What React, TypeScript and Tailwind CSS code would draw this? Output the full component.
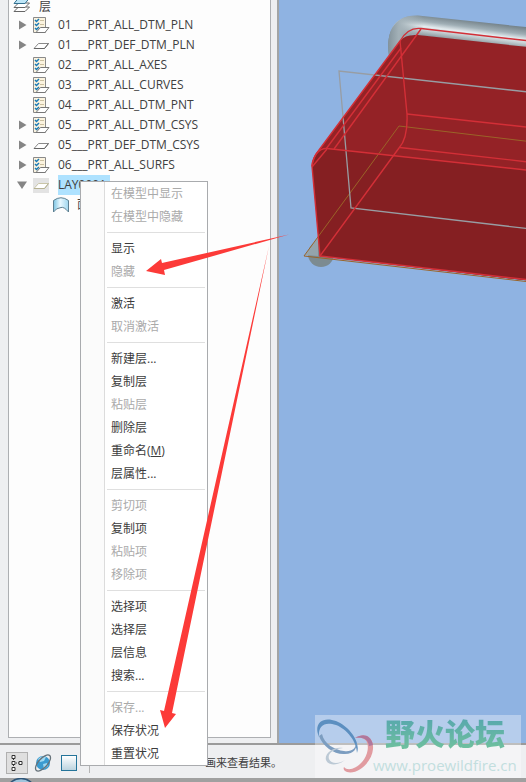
import React from 'react';

type IconKind = 'list' | 'plane';

interface LayerRow {
  name: string;
  icon: IconKind;
  expandable?: boolean;
}

interface MenuEntry {
  label: string;
  disabled?: boolean;
  accessKey?: string;
}

const layers: LayerRow[] = [
  { name: '01___PRT_ALL_DTM_PLN', icon: 'list', expandable: true },
  { name: '01___PRT_DEF_DTM_PLN', icon: 'plane', expandable: true },
  { name: '02___PRT_ALL_AXES', icon: 'list' },
  { name: '03___PRT_ALL_CURVES', icon: 'list' },
  { name: '04___PRT_ALL_DTM_PNT', icon: 'list' },
  { name: '05___PRT_ALL_DTM_CSYS', icon: 'list', expandable: true },
  { name: '05___PRT_DEF_DTM_CSYS', icon: 'plane', expandable: true },
  { name: '06___PRT_ALL_SURFS', icon: 'list', expandable: true },
];

const menuGroups: MenuEntry[][] = [
  [
    { label: '在模型中显示', disabled: true },
    { label: '在模型中隐藏', disabled: true },
  ],
  [{ label: '显示' }, { label: '隐藏', disabled: true }],
  [{ label: '激活' }, { label: '取消激活', disabled: true }],
  [
    { label: '新建层...' },
    { label: '复制层' },
    { label: '粘贴层', disabled: true },
    { label: '删除层' },
    { label: '重命名', accessKey: 'M' },
    { label: '层属性...' },
  ],
  [
    { label: '剪切项', disabled: true },
    { label: '复制项' },
    { label: '粘贴项', disabled: true },
    { label: '移除项', disabled: true },
  ],
  [{ label: '选择项' }, { label: '选择层' }, { label: '层信息' }, { label: '搜索...' }],
  [{ label: '保存...', disabled: true }, { label: '保存状况' }, { label: '重置状况' }],
];

const LayersIcon = () => (
  <svg width="18" height="20" viewBox="0 0 18 20" className="shrink-0">
    <g fill="#fff" stroke="#666" strokeLinejoin="round">
      <path d="M1 16.500 5.500 12h11L12 16.500z" />
      <path d="M1 12.500 5.500 8h11L12 12.500z" />
      <path d="M1 8.500 5.500 3h11L12 8.500z" fill="#bfe6f7" stroke="#33708f" />
    </g>
  </svg>
);

const ListIcon = () => (
  <svg width="17" height="17" viewBox="0 0 17 17" className="shrink-0">
    <path d="M.5.5h12v15H.5z" fill="#fbf3df" stroke="#8a8a8a" />
    <path d="M7 3.500h4M7 7.500h4M7 11.500h3" stroke="#cbbf9f" />
    <path d="m2 3 1.500 1.500L6 2M2 7l1.500 1.500L6 6M2 11l1.500 1.500L6 10" fill="none" stroke="#1879b5" strokeWidth="1.500" />
    <path d="M3 15.500 7.500 10.500h8.500L12 15.500z" fill="#fff" stroke="#777" />
  </svg>
);

const PlaneIcon = ({ selected = false }: { selected?: boolean }) => (
  <svg width="17" height="17" viewBox="0 0 17 17" className="shrink-0">
    {selected && <path d="M0 1h16v15H0z" fill="#e3e3e3" />}
    <path d="M1 11.500 5.500 6.500h10L11.500 11.500z" fill="#fff" stroke={selected ? '#c9c5a8' : '#8a8a8a'} />
    <path d="M1 11.500h10.500l4-5" fill="none" stroke={selected ? '#b5b192' : '#666'} />
  </svg>
);

const SurfaceIcon = () => (
  <svg width="16" height="16" viewBox="0 0 16 16" className="shrink-0">
    <defs>
      <linearGradient id="surf">
        <stop offset="0" stopColor="#7cc4e2" />
        <stop offset=".45" stopColor="#e8f8ff" />
        <stop offset="1" stopColor="#9fd6ee" />
      </linearGradient>
    </defs>
    <path d="M.5 3.500Q8-2 15.500 3.500v11.500Q11 9.500 8 10.500 3 11 .5 15z" fill="url(#surf)" stroke="#5c7f91" />
  </svg>
);

const Expander = ({ state }: { state?: 'open' | 'closed' }) => (
  <svg width="10" height="10" viewBox="0 0 10 10" className="shrink-0" fill="#858585">
    {state === 'closed' && <path d="M0 .5v9L7.500 5z" />}
    {state === 'open' && <path d="M0 1.500h10L5 9z" />}
  </svg>
);

const LayerTree = () => (
  <div className="text-xs leading-5 text-[#404040]">
    <div className="flex h-[15px] items-end gap-2 pl-1">
      <LayersIcon />
      <span className="leading-4">层</span>
    </div>
    <ul>
      {layers.map((layer) => (
        <li key={layer.name} className="flex h-5 items-center pl-2.5">
          <Expander state={layer.expandable ? 'closed' : undefined} />
          <span className="ml-1 mr-2">{layer.icon === 'list' ? <ListIcon /> : <PlaneIcon />}</span>
          <span className="whitespace-nowrap">{layer.name}</span>
        </li>
      ))}
      <li>
        <div className="flex h-5 items-center pl-2">
          <Expander state="open" />
          <span className="ml-1.5 mr-2">
            <PlaneIcon selected />
          </span>
          <span className="w-[52px] bg-[#aee2ff]">LAY0001</span>
        </div>
        <div className="flex h-5 items-center gap-2 pl-11">
          <SurfaceIcon />
          <span>面组</span>
        </div>
      </li>
    </ul>
  </div>
);

const ContextMenu = () => (
  <div
    role="menu"
    className="absolute left-20 top-[181px] w-32 border border-[#a9abae] bg-white text-xs text-[#3c3c3c]"
  >
    <div className="absolute inset-y-0 left-0 w-6 border-r border-[#dcdcdc] bg-[#fbfbfb]" />
    <div className="ml-6">
      {menuGroups.map((group, index) => (
        <div key={index}>
          {index > 0 && (
            <div className="flex h-[9px] items-center px-0.5">
              <div className="h-px w-full bg-[#dfdfdf]" />
            </div>
          )}
          {group.map((item) => (
            <button
              key={item.label}
              role="menuitem"
              disabled={item.disabled}
              className="block h-[23px] w-full whitespace-nowrap pl-1.5 text-left leading-[23px] disabled:text-[#aaaaaa]"
            >
              {item.label}
              {item.accessKey && (
                <>
                  (<u>{item.accessKey}</u>)
                </>
              )}
            </button>
          ))}
        </div>
      ))}
    </div>
  </div>
);

// model view, drawn in window coordinates and shifted by the tree panel's width
const ModelView = () => (
  <svg className="block h-full w-full" aria-label="model">
    <defs>
      <linearGradient id="pipe" gradientUnits="userSpaceOnUse" x1="460" y1="19" x2="457" y2="42">
        <stop offset="0" stopColor="#75838a" />
        <stop offset=".3" stopColor="#a0afb6" />
        <stop offset=".52" stopColor="#e4ecef" />
        <stop offset=".68" stopColor="#c5cfd3" />
        <stop offset="1" stopColor="#77858a" />
      </linearGradient>
      <linearGradient id="elbow" gradientUnits="userSpaceOnUse" x1="388" y1="0" x2="424" y2="0">
        <stop offset="0" stopColor="#83929a" />
        <stop offset=".3" stopColor="#a3b1b8" />
        <stop offset="1" stopColor="#a3b1b8" stopOpacity="0" />
      </linearGradient>
    </defs>
    <g transform="translate(-279 0)" fill="none">
      <path d="M389 56C386 34 392 15 418 15.500L600 35v22L412 34.500 398 46z" fill="url(#pipe)" />
      <path d="M389 56C386 34 392 15 418 15.500L424 16v18L398 46z" fill="url(#elbow)" />
      <circle cx="321" cy="254" r="13" fill="#7c8b91" />
      <path d="M305 255 318 237v19z" fill="#94a4ac" />
      <path d="M312 164Q312 159 319 150L400 41Q405 34 418 35L600 55v234L320 256z" fill="#942226" />
      <path d="M312 166Q315 149 327 149L600 178v111L320 256z" fill="#851f22" />
      <g stroke="#9a6428">
        <path d="M600 150 399 126 304 256 600 290" />
      </g>
      <g stroke="#989da3" strokeWidth="1.300">
        <path d="M600 100 339 71 351 208 600 237" />
      </g>
      <g stroke="#d32f37" strokeWidth="1.400">
        <path d="M600 49 421 28.500Q408 27 400 41L319 150Q312 159 312 166L320 256 600 288" />
        <path d="M421 29 334 149M401 48 326 149M312 167 327 149" />
        <path d="M400 41 407 114Q408 138 399 148L320 256" />
        <path d="M407 114 600 135M400 147.500 600 170" />
        <path d="M312 166Q315 148 327 148.500L600 178" />
      </g>
    </g>
  </svg>
);

const StatusBar = () => (
  <footer className="flex h-[35px] shrink-0 items-center border-t-2 border-[#9b9b9b] bg-[#eeeff1] pl-1.5 pt-0.5 text-[11px] text-[#404040]">
    <button aria-label="model tree" className="flex size-[22px] items-center justify-center border border-[#b0b0b0] bg-[#dfdfdf]">
      <svg width="14" height="18" viewBox="0 0 14 18" fill="#fff" stroke="#333">
        <path d="M3.500 5v2M3.500 11v2M6 9h3" strokeDasharray="1 1" />
        <path d="M2 1.500h3v3H2zM2 7.500h3v3H2zM2 13.500h3v3H2zM9 7.500h3v3H9z" />
      </svg>
    </button>
    <button aria-label="browser" className="ml-1.5">
      <svg width="18" height="18" viewBox="0 0 18 18">
        <circle cx="9" cy="9" r="7" fill="#3a9bd0" />
        <path d="M4 5Q8 1 12 3L10 7 6 8zM9 10l4-1 1 3-4 3z" fill="#9fd9f2" />
        <ellipse cx="9" cy="9" rx="10" ry="4.500" fill="none" stroke="#66727a" strokeWidth="1.300" transform="rotate(-48 9 9)" />
      </svg>
    </button>
    <button aria-label="full screen" className="ml-[9px] size-4 border border-[#24749a] bg-linear-to-b from-white to-[#bcd4df]" />
    <div className="ml-3 h-5 w-px bg-[#b5b5b5]" />
    <span className="ml-[115px] whitespace-nowrap leading-4">画来查看结果。</span>
  </footer>
);

const Watermark = () => (
  <div className="absolute bottom-1 right-[5px] flex h-[63px] w-[206px] bg-white/35">
    <svg width="60" height="63" viewBox="0 0 60 63" className="shrink-0" fillRule="evenodd">
      <path d="M4 22C-2 8 8 1 21 6 34 11 46 27 42 38 42 27 32 14 21 10 9 6 3 11 4 22Z" fill="#5c8fc0" />
      <path d="M4 21C8 32 20 40 30 39 39 39 43 33 41 26 42 34 36 37 29 36 20 35 9 29 7 19Z" fill="#7c9dc0" />
      <path d="M40 23C50 17 59 22 58 34 57 47 43 60 32 57 29 56 28 54 29 52 34 58 48 51 52 38 55 27 50 21 40 23Z" fill="#e19ba0" />
      <path d="M40 23C48 18 56 20 58 30L54 31C53 24 48 22 40 23Z" fill="#b0789d" />
      <path d="M28 33C18 31 9 39 11 45 13 51 23 51 30 45 24 49 16 49 14 44 12 38 19 34 28 33Z" fill="#bcc9d5" />
    </svg>
    <div className="ml-2.5 whitespace-nowrap">
      <div className="bg-linear-to-b from-[#55a5ae] to-[#72c39b] bg-clip-text text-[30px] font-black leading-[38px] text-transparent">
        野火论坛
      </div>
      <div className="-ml-3 font-['Open_Sans'] text-[15px] leading-6 text-[#c2dede]">www.proewildfire.cn</div>
    </div>
  </div>
);

const Arrows = () => (
  <svg className="pointer-events-none absolute inset-0 h-full w-full" fill="#fc3a38">
    <path d="M289 234.500 164 270 165 275 146 271 161 259 162 263z" />
    <path d="M269 246 172 713 176 714 165 728 160 710 164 711z" />
  </svg>
);

const App: React.FC = () => {
  return (
    <div className="relative flex h-screen flex-col overflow-hidden bg-[#a0a0a0] font-['Open_Sans','Noto_Sans_CJK_SC',sans-serif]">
      <main className="flex min-h-0 flex-1">
        <aside className="flex w-[279px] shrink-0 flex-col border-r-2 border-[#a3a5a6] bg-[#eeeff1] pb-[5px] pl-2 pr-1.5">
          <div className="flex-1 overflow-hidden border border-t-0 border-[#adafb2] bg-[#fdfdfd]">
            <LayerTree />
          </div>
        </aside>
        <section className="min-w-0 flex-1 bg-[#8fb3e2]">
          <ModelView />
        </section>
      </main>
      <StatusBar />
      <div className="h-1 shrink-0 overflow-hidden pl-2">
        <svg width="26" height="4">
          <ellipse cx="13" cy="11" rx="13" ry="10.500" fill="#9fc4dc" stroke="#2f5578" strokeWidth="1.500" />
        </svg>
      </div>
      <ContextMenu />
      <Watermark />
      <Arrows />
    </div>
  );
};

export default App;
